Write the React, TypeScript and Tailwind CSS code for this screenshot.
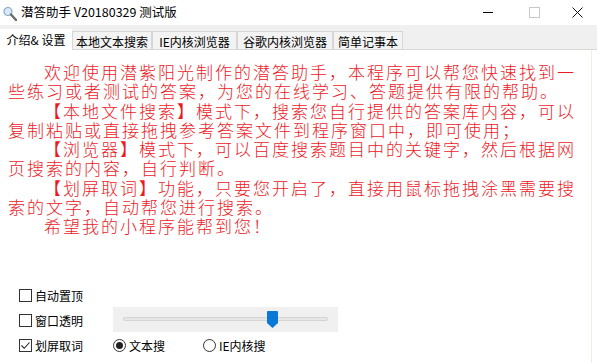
import React from "react";

const cjk = { fontFamily: '"Noto Sans CJK SC", "Noto Sans", sans-serif' };

const tabs = [
  { label: "本地文本搜索", w: "w-[80px]" },
  { label: "IE内核浏览器", w: "w-[85px]" },
  { label: "谷歌内核浏览器", w: "w-[96px]" },
  { label: "简单记事本", w: "w-[70px]" },
];

// each line is kept as it wraps in the original window
const lines: { text: string; indent?: boolean }[] = [
  { text: "欢迎使用潜紫阳光制作的潜答助手，本程序可以帮您快速找到一", indent: true },
  { text: "些练习或者测试的答案，为您的在线学习、答题提供有限的帮助。" },
  { text: "【本地文件搜索】模式下，搜索您自行提供的答案库内容，可以", indent: true },
  { text: "复制粘贴或直接拖拽参考答案文件到程序窗口中，即可使用；" },
  { text: "【浏览器】模式下，可以百度搜索题目中的关键字，然后根据网", indent: true },
  { text: "页搜索的内容，自行判断。" },
  { text: "【划屏取词】功能，只要您开启了，直接用鼠标拖拽涂黑需要搜", indent: true },
  { text: "索的文字，自动帮您进行搜索。" },
  { text: "希望我的小程序能帮到您！", indent: true },
];

const CheckBox = ({ checked, label }: { checked?: boolean; label: string }) => (
  <div className="flex items-center h-[25px] pl-[19px]">
    <div className="w-[13px] h-[13px] border border-[#333] bg-white flex items-center justify-center">
      {checked && (
        <svg width="11" height="11" viewBox="0 0 11 11">
          <path d="M1.5 5.5 L4.2 8.3 L9.5 2.5" fill="none" stroke="#222" strokeWidth="1.1" />
        </svg>
      )}
    </div>
    <span className="ml-[3px] text-[12px] text-black leading-none">{label}</span>
  </div>
);

const Radio = ({ checked, label }: { checked?: boolean; label: string }) => (
  <div className="flex items-center h-[25px]">
    <div className="w-[13px] h-[13px] rounded-full border border-[#333] bg-white flex items-center justify-center">
      {checked && <div className="w-[7px] h-[7px] rounded-full bg-[#222]" />}
    </div>
    <span className="ml-[3px] text-[12px] text-black leading-none">{label}</span>
  </div>
);

const App = () => {
  return (
    <div className="w-[597px] h-[363px] bg-white flex flex-col overflow-hidden" style={cjk}>
      {/* 标题栏 */}
      <div className="h-[25px] flex items-center shrink-0">
        <svg width="16" height="16" viewBox="0 0 16 16" className="ml-[2px]">
          <circle cx="6" cy="6.5" r="4" fill="#d6e9f7" stroke="#8aa8c2" strokeWidth="1.2" />
          <path d="M9 9.5 L14 15" stroke="#6b6b6b" strokeWidth="2.4" strokeLinecap="round" />
        </svg>
        <span className="ml-[3px] text-[12.5px] text-black">潜答助手 V20180329 测试版</span>
        <div className="ml-auto flex h-full">
          <div className="w-[46px] flex items-center justify-center">
            <div className="w-[10px] h-px bg-black" />
          </div>
          <div className="w-[46px] flex items-center justify-center">
            <div className="w-[11px] h-[11px] border border-[#c8c8c8]" />
          </div>
          <div className="w-[40px] flex items-center justify-center">
            <svg width="11" height="11" viewBox="0 0 11 11">
              <path d="M0.5 0.5 L10.5 10.5 M10.5 0.5 L0.5 10.5" stroke="#111" strokeWidth="1" />
            </svg>
          </div>
        </div>
      </div>

      {/* 选项卡 */}
      <div className="h-[25px] shrink-0 bg-[#f0f0f0] border-b border-[#d9d9d9] flex items-end">
        <div className="w-[72px] h-[21px] -mb-px bg-white flex items-center justify-center text-[12px] text-black pt-[1px]">
          介绍& 设置
        </div>
        {tabs.map((t) => (
          <div
            key={t.label}
            className={`${t.w} h-[18px] border border-b-0 border-[#d6d6d6] bg-[#f3f3f3] flex items-center justify-center text-[12px] text-black pt-[3px]`}
          >
            {t.label}
          </div>
        ))}
      </div>

      {/* 内容 */}
      <div className="flex-1 flex flex-col border-r border-[#efeee4] mr-[5px]">
        <div className="pt-[12px] pl-[8px] text-[17px] tracking-[2px] leading-[19.25px] font-light text-[#ec1a1f]">
          {lines.map((l, i) => (
            <div key={i} className={`whitespace-nowrap ${l.indent ? "pl-[36px]" : ""}`}>
              {l.text}
            </div>
          ))}
        </div>

        <div className="mt-auto pb-[5px] grid grid-cols-[113px_90px_135px]">
          <div className="col-span-3">
            <CheckBox label="自动置顶" />
          </div>
          <CheckBox label="窗口透明" />
          <div className="col-span-2 flex items-center">
            <div className="relative w-[225px] h-[25px] -mt-[3px] bg-[#f0f0f0] flex items-center px-[10px]">
              <div className="w-full h-[4px] rounded-[2px] bg-[#e7e7e7] border border-[#d4d4d4]" />
              <svg width="11" height="17" viewBox="0 0 11 17" className="absolute left-[154px] top-[4px]">
                <path d="M0 1 Q0 0 1 0 L10 0 Q11 0 11 1 L11 12 L5.5 17 L0 12 Z" fill="#0a78d7" />
              </svg>
            </div>
          </div>
          <CheckBox checked label="划屏取词" />
          <Radio checked label="文本搜" />
          <Radio label="IE内核搜" />
        </div>
      </div>
    </div>
  );
};

export default App;
